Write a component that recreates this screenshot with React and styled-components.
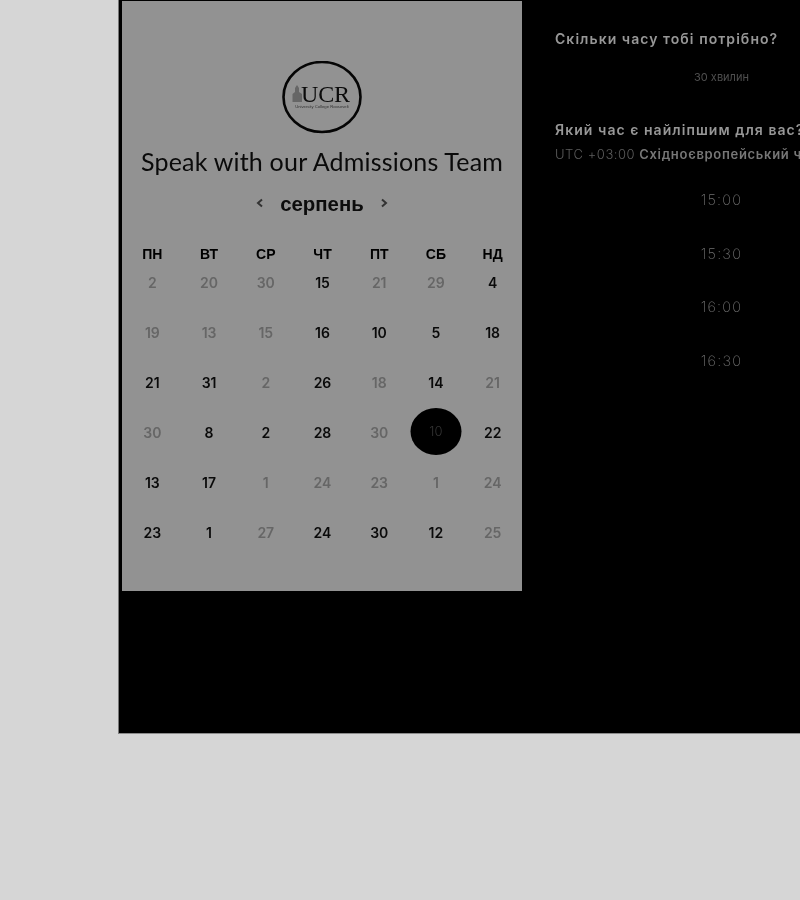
import React from "react";
import styled, { createGlobalStyle } from "styled-components";

const GlobalStyle = createGlobalStyle`
html, body {
  margin: 0;
  padding: 0;
  height: 900px;
  overflow: hidden;
  background: #d6d6d6;
}
* { box-sizing: border-box; }
`

const Page = styled.div`
width: 800px;
height: 900px;
overflow: hidden;
padding-left: 118px;
background: #d6d6d6;
filter: grayscale(1);
`
const Card = styled.div`
width: 900px;
height: 734px;
background: #000;
border-left: 1px solid #777;
border-bottom: 1px solid #8a8a8a;
padding: 1px 0 0 3px;
display: flex;
align-items: flex-start;
`
const LeftPanel = styled.div`
width: 400px;
height: 590px;
flex: none;
background: #929292;
padding-top: 60px;
display: flex;
flex-direction: column;
align-items: center;
`
const Logo = styled.svg`
width: 80px;
height: 74px;
display: block;
`
const Title = styled.h1`
margin: 11px 0 0;
font: 400 25px/30px Lato, sans-serif;
letter-spacing: 0.2px;
color: #0a0a0a;
white-space: nowrap;
`
const MonthRow = styled.div`
margin-top: 13px;
height: 30px;
display: flex;
align-items: center;
gap: 15px;
font: 700 20.4px/30px "Liberation Sans", sans-serif;
color: #0c0c0c;
`
const Arrow = styled.svg`
width: 10px;
height: 12px;
margin-top: -3px;
`
const HeadRow = styled.div`
margin-top: 26px;
margin-left: 1px;
width: 397px;
display: grid;
grid-template-columns: repeat(7, 1fr);
text-align: center;
font: 700 14px/18px "Liberation Sans", sans-serif;
color: #000;
`
const Grid = styled.div`
margin-top: 10px;
margin-left: 1px;
width: 397px;
display: grid;
grid-template-columns: repeat(7, 1fr);
grid-auto-rows: 50px;
`
const Day = styled.div`
height: 20px;
text-align: center;
font: 600 14px/20px Inter, sans-serif;
color: ${p => (p.$off ? "#666" : "#0a0a0a")};
position: relative;
`
const Selected = styled.div`
position: absolute;
left: 50%;
top: -15px;
width: 51px;
height: 47px;
transform: translateX(-50%);
border-radius: 50%;
background: #000;
color: #333;
font: 300 13px/46px Inter, sans-serif;
`
const RightPanel = styled.div`
flex: 1;
padding: 28px 0 0 33px;
font-family: Inter, sans-serif;
white-space: nowrap;
`
const Question = styled.div`
font-weight: 600;
font-size: 14px;
line-height: 20px;
letter-spacing: 1.05px;
color: #979797;
`
const Duration = styled.div`
width: 333px;
margin-top: 20px;
text-align: center;
font-size: 11px;
font-weight: 400;
line-height: 16px;
color: #4f4f4f;
`
const SecondQuestion = styled(Question)`
margin-top: 35px;
`
const Timezone = styled.div`
margin-top: 4px;
font-size: 13px;
line-height: 20px;
letter-spacing: 0.7px;
font-weight: 600;
color: #777;
& span {
  font-weight: 300;
  letter-spacing: 0.55px;
  color: #5c5c5c;
}
`
const Times = styled.div`
width: 333px;
margin-top: 13px;
display: flex;
flex-direction: column;
`
const Time = styled.div`
height: 53.7px;
text-align: center;
font-size: 14.5px;
font-weight: 200;
line-height: 46px;
letter-spacing: 1.2px;
color: #707070;
`

const days = [
  [2, 1], [20, 1], [30, 1], [15], [21, 1], [29, 1], [4],
  [19, 1], [13, 1], [15, 1], [16], [10], [5], [18],
  [21], [31], [2, 1], [26], [18, 1], [14], [21, 1],
  [30, 1], [8], [2], [28], [30, 1], [10, 0, 1], [22],
  [13], [17], [1, 1], [24, 1], [23, 1], [1, 1], [24, 1],
  [23], [1], [27, 1], [24], [30], [12], [25, 1],
]

const heads = ["ПН", "ВТ", "СР", "ЧТ", "ПТ", "СБ", "НД"]
const times = ["15:00", "15:30", "16:00", "16:30"]

const App = () => (
  <Page>
    <GlobalStyle />
    <Card>
      <LeftPanel>
        <Logo viewBox="0 0 80 74">
          <ellipse cx="40" cy="36" rx="38.5" ry="35" fill="none" stroke="#050505" strokeWidth="2.6" />
          <path d="M10.5 41 V33 L13 31 V27 L15 24 L17 27 V31 L20 33 V41 Z" fill="#666" />
          <text x="19" y="41" fontFamily="'Liberation Serif', serif" fontSize="24" fill="#0c0c0c" letterSpacing="-0.2">UCR</text>
          <text x="40" y="46.5" textAnchor="middle" fontFamily="'Liberation Sans', sans-serif" fontSize="4.2" fill="#333">University College Roosevelt</text>
        </Logo>
        <Title>Speak with our Admissions Team</Title>
        <MonthRow>
          <Arrow viewBox="0 0 10 12"><path d="M7 2.5 L3 6 L7 9.5" fill="none" stroke="#333" strokeWidth="2" /></Arrow>
          <span>серпень</span>
          <Arrow viewBox="0 0 10 12"><path d="M3 2.5 L7 6 L3 9.5" fill="none" stroke="#333" strokeWidth="2" /></Arrow>
        </MonthRow>
        <HeadRow>
          {heads.map(h => <div key={h}>{h}</div>)}
        </HeadRow>
        <Grid>
          {days.map(([n, off, sel], i) => (
            <Day key={i} $off={off}>
              {sel ? <Selected>{n}</Selected> : n}
            </Day>
          ))}
        </Grid>
      </LeftPanel>
      <RightPanel>
        <Question>Скільки часу тобі потрібно?</Question>
        <Duration>30 хвилин</Duration>
        <SecondQuestion>Який час є найліпшим для вас?</SecondQuestion>
        <Timezone><span>UTC +03:00</span> Східноєвропейський час</Timezone>
        <Times>
          {times.map(t => <Time key={t}>{t}</Time>)}
        </Times>
      </RightPanel>
    </Card>
  </Page>
)

export default App
